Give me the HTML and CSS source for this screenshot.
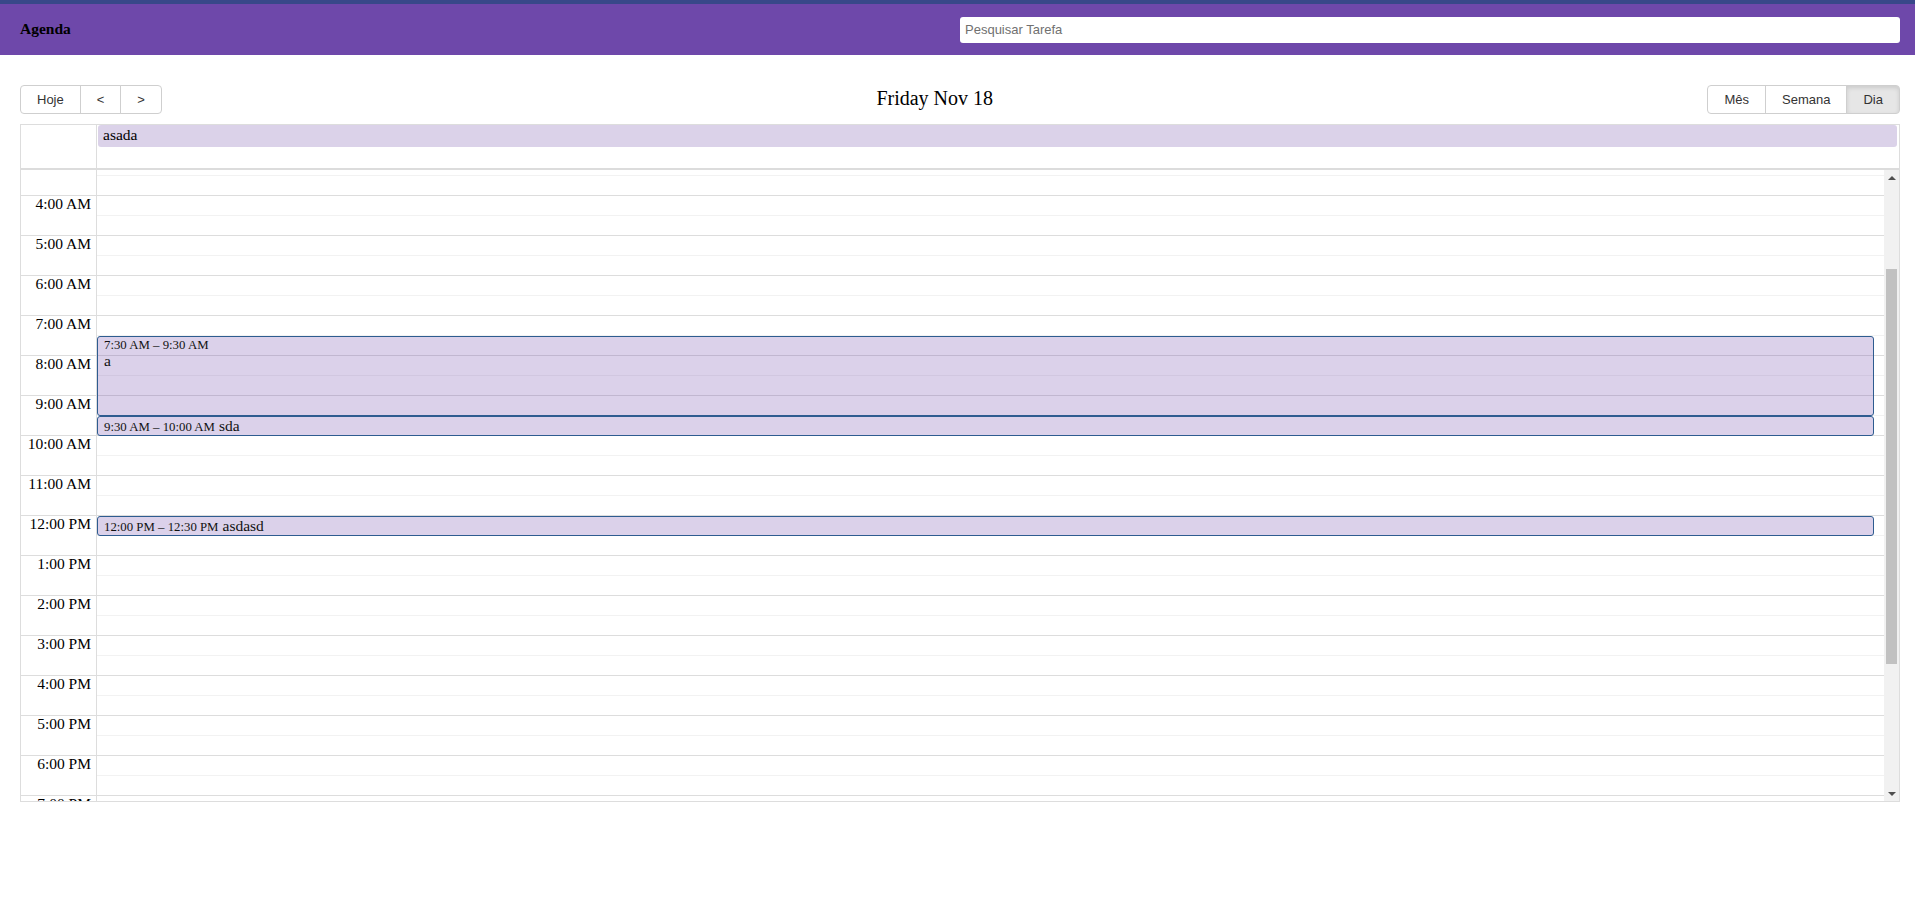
FILE: index.html
```html
<!DOCTYPE html>
<html lang="pt">
<head>
<meta charset="utf-8">
<title>Agenda</title>
<link rel="stylesheet" href="styles.css">
</head>
<body>
<header class="topbar">
  <div class="brand">Agenda</div>
  <input class="search" type="text" placeholder="Pesquisar Tarefa">
</header>
<main class="page">
  <div class="toolbar">
    <div class="btn-group">
      <button class="btn">Hoje</button><button class="btn">&lt;</button><button class="btn">&gt;</button>
    </div>
    <h2 class="title">Friday Nov 18</h2>
    <div class="btn-group">
      <button class="btn">Mês</button><button class="btn">Semana</button><button class="btn active">Dia</button>
    </div>
  </div>
  <div class="calendar">
    <div class="allday">
      <div class="allday-axis"></div>
      <div class="allday-content">
        <div class="allday-event">asada</div>
      </div>
    </div>
    <div class="divider"></div>
    <div class="scroll-area">
      <div class="scroller">
        <div class="grid">
          <div class="slot major"><div class="axis-cell">12:00 AM</div><div class="slot-cell"></div></div>
          <div class="slot minor"><div class="axis-cell"></div><div class="slot-cell"></div></div>
          <div class="slot major"><div class="axis-cell">1:00 AM</div><div class="slot-cell"></div></div>
          <div class="slot minor"><div class="axis-cell"></div><div class="slot-cell"></div></div>
          <div class="slot major"><div class="axis-cell">2:00 AM</div><div class="slot-cell"></div></div>
          <div class="slot minor"><div class="axis-cell"></div><div class="slot-cell"></div></div>
          <div class="slot major"><div class="axis-cell">3:00 AM</div><div class="slot-cell"></div></div>
          <div class="slot minor"><div class="axis-cell"></div><div class="slot-cell"></div></div>
          <div class="slot major"><div class="axis-cell">4:00 AM</div><div class="slot-cell"></div></div>
          <div class="slot minor"><div class="axis-cell"></div><div class="slot-cell"></div></div>
          <div class="slot major"><div class="axis-cell">5:00 AM</div><div class="slot-cell"></div></div>
          <div class="slot minor"><div class="axis-cell"></div><div class="slot-cell"></div></div>
          <div class="slot major"><div class="axis-cell">6:00 AM</div><div class="slot-cell"></div></div>
          <div class="slot minor"><div class="axis-cell"></div><div class="slot-cell"></div></div>
          <div class="slot major"><div class="axis-cell">7:00 AM</div><div class="slot-cell"></div></div>
          <div class="slot minor"><div class="axis-cell"></div><div class="slot-cell"></div></div>
          <div class="slot major"><div class="axis-cell">8:00 AM</div><div class="slot-cell"></div></div>
          <div class="slot minor"><div class="axis-cell"></div><div class="slot-cell"></div></div>
          <div class="slot major"><div class="axis-cell">9:00 AM</div><div class="slot-cell"></div></div>
          <div class="slot minor"><div class="axis-cell"></div><div class="slot-cell"></div></div>
          <div class="slot major"><div class="axis-cell">10:00 AM</div><div class="slot-cell"></div></div>
          <div class="slot minor"><div class="axis-cell"></div><div class="slot-cell"></div></div>
          <div class="slot major"><div class="axis-cell">11:00 AM</div><div class="slot-cell"></div></div>
          <div class="slot minor"><div class="axis-cell"></div><div class="slot-cell"></div></div>
          <div class="slot major"><div class="axis-cell">12:00 PM</div><div class="slot-cell"></div></div>
          <div class="slot minor"><div class="axis-cell"></div><div class="slot-cell"></div></div>
          <div class="slot major"><div class="axis-cell">1:00 PM</div><div class="slot-cell"></div></div>
          <div class="slot minor"><div class="axis-cell"></div><div class="slot-cell"></div></div>
          <div class="slot major"><div class="axis-cell">2:00 PM</div><div class="slot-cell"></div></div>
          <div class="slot minor"><div class="axis-cell"></div><div class="slot-cell"></div></div>
          <div class="slot major"><div class="axis-cell">3:00 PM</div><div class="slot-cell"></div></div>
          <div class="slot minor"><div class="axis-cell"></div><div class="slot-cell"></div></div>
          <div class="slot major"><div class="axis-cell">4:00 PM</div><div class="slot-cell"></div></div>
          <div class="slot minor"><div class="axis-cell"></div><div class="slot-cell"></div></div>
          <div class="slot major"><div class="axis-cell">5:00 PM</div><div class="slot-cell"></div></div>
          <div class="slot minor"><div class="axis-cell"></div><div class="slot-cell"></div></div>
          <div class="slot major"><div class="axis-cell">6:00 PM</div><div class="slot-cell"></div></div>
          <div class="slot minor"><div class="axis-cell"></div><div class="slot-cell"></div></div>
          <div class="slot major"><div class="axis-cell">7:00 PM</div><div class="slot-cell"></div></div>
          <div class="slot minor"><div class="axis-cell"></div><div class="slot-cell"></div></div>
          <div class="slot major"><div class="axis-cell">8:00 PM</div><div class="slot-cell"></div></div>
          <div class="slot minor"><div class="axis-cell"></div><div class="slot-cell"></div></div>
          <div class="slot major"><div class="axis-cell">9:00 PM</div><div class="slot-cell"></div></div>
          <div class="slot minor"><div class="axis-cell"></div><div class="slot-cell"></div></div>
          <div class="slot major"><div class="axis-cell">10:00 PM</div><div class="slot-cell"></div></div>
          <div class="slot minor"><div class="axis-cell"></div><div class="slot-cell"></div></div>
          <div class="slot major"><div class="axis-cell">11:00 PM</div><div class="slot-cell"></div></div>
          <div class="slot minor"><div class="axis-cell"></div><div class="slot-cell"></div></div>

          <div class="event tall" style="top: 301px; height: 80px;">
            <div class="ev-time">7:30 AM – 9:30 AM</div>
            <div class="ev-title">a</div>
          </div>
          <div class="event short" style="top: 381px; height: 20px;">
            <span class="ev-time">9:30 AM – 10:00 AM</span><span class="ev-title">sda</span>
          </div>
          <div class="event short" style="top: 481px; height: 20px;">
            <span class="ev-time">12:00 PM – 12:30 PM</span><span class="ev-title">asdasd</span>
          </div>
        </div>
      </div>
      <div class="scrollbar">
        <div class="sb-btn up"></div>
        <div class="sb-track"><div class="sb-thumb"></div></div>
        <div class="sb-btn down"></div>
      </div>
    </div>
  </div>
</main>
<script src="script.js"></script>
</body>
</html>
```

FILE: styles.css
```css
html, body {
  margin: 0;
  padding: 0;
  background: #fff;
}

body {
  font-family: "Liberation Serif", "Times New Roman", serif;
  font-size: 15.5px;
  color: #000;
}

.topbar {
  display: flex;
  align-items: center;
  justify-content: space-between;
  height: 51px;
  padding: 0 15px 0 20px;
  background: #6e48aa;
  border-top: 4px solid #384889;
}

.brand {
  font-weight: bold;
  font-size: 15.5px;
  color: #000;
  margin-top: -1px;
}

.search {
  width: 940px;
  height: 26px;
  box-sizing: border-box;
  border: none;
  border-radius: 3px;
  padding: 0 5px;
  font-family: "Liberation Sans", Arial, sans-serif;
  font-size: 13px;
  color: #333;
  background: #fff;
  outline: none;
}

.search::placeholder {
  color: #707070;
}

.page {
  padding: 30px 15px 0 20px;
}

.toolbar {
  display: flex;
  align-items: center;
  justify-content: space-between;
  height: 29px;
  margin-bottom: 10px;
}

.title {
  margin: -2px 0 0 0;
  font-size: 20px;
  font-weight: normal;
  line-height: 23px;
}

.btn-group {
  display: flex;
}

.btn {
  height: 29px;
  box-sizing: border-box;
  padding: 0 16px;
  margin: 0;
  border: 1px solid #cfcfcf;
  background: #fff;
  color: #333;
  font-family: "Liberation Sans", Arial, sans-serif;
  font-size: 13px;
  cursor: pointer;
}

.btn + .btn {
  margin-left: -1px;
}

.btn:first-child {
  border-radius: 4px 0 0 4px;
}

.btn:last-child {
  border-radius: 0 4px 4px 0;
}

.btn.active {
  background: #e6e6e6;
  box-shadow: inset 0 2px 4px rgba(0, 0, 0, 0.12);
}

.calendar {
  border: 1px solid #ddd;
}

.allday {
  display: flex;
  height: 43px;
}

.allday-axis {
  width: 75px;
  border-right: 1px solid #ddd;
}

.allday-content {
  flex: 1;
  padding: 0 2px 0 1px;
}

.allday-event {
  height: 22px;
  box-sizing: border-box;
  padding: 1px 5px;
  background: #dbd2e9;
  border-radius: 3px;
  line-height: 18px;
}

.divider {
  height: 2px;
  background: #dcdcdc;
}

.scroll-area {
  display: flex;
  height: 631px;
}

.scroller {
  flex: 1;
  overflow: hidden;
}

.grid {
  position: relative;
}

.slot {
  display: flex;
  height: 20px;
}

.axis-cell {
  flex: none;
  width: 76px;
  box-sizing: border-box;
  border-right: 1px solid #ddd;
  padding-right: 5px;
  text-align: right;
  white-space: nowrap;
  line-height: 16px;
}

.slot-cell {
  flex: 1;
}

.slot.major .axis-cell,
.slot.major .slot-cell {
  border-top: 1px solid #ddd;
}

.slot.minor .slot-cell {
  border-top: 1px solid #f2f2f2;
}

.event {
  position: absolute;
  left: 76px;
  right: 10px;
  box-sizing: border-box;
  background: rgba(110, 72, 170, 0.25);
  border: 1px solid #2e5c90;
  border-radius: 3px;
  padding: 0 5px 0 6px;
  overflow: hidden;
  color: #111;
}

.event.tall {
  padding-top: 1px;
}

.event .ev-time {
  font-size: 12.8px;
  line-height: 14px;
}

.event .ev-title {
  font-size: 15.5px;
  line-height: 17px;
}

.event.short {
  display: flex;
  align-items: baseline;
  gap: 4px;
  line-height: 17px;
}

.scrollbar {
  flex: none;
  width: 15px;
  display: flex;
  flex-direction: column;
  background: #f1f1f1;
}

.sb-btn {
  height: 15px;
  display: flex;
  align-items: center;
  justify-content: center;
}

.sb-btn::before {
  content: "";
  width: 0;
  height: 0;
  border-left: 4px solid transparent;
  border-right: 4px solid transparent;
}

.sb-btn.up::before {
  border-bottom: 4px solid #505050;
}

.sb-btn.down::before {
  border-top: 4px solid #505050;
}

.sb-track {
  flex: 1;
  padding: 0 2px;
}

.sb-thumb {
  margin-top: 84px;
  height: 395px;
  background: #c1c1c1;
}
```

FILE: script.js
```js
document.querySelector('.scroller').scrollTop = 135;
```
